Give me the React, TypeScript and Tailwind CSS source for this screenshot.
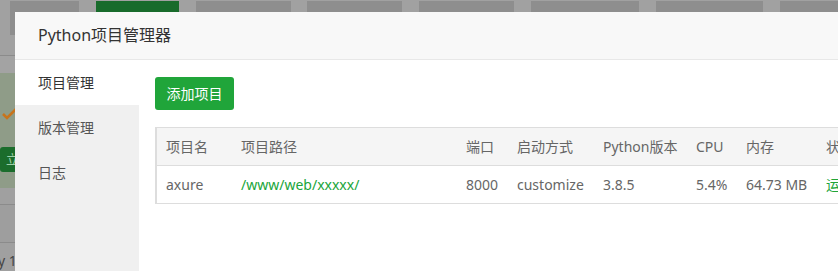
import React from "react";

const font = { fontFamily: '"Noto Sans", "Noto Sans CJK SC", sans-serif' };

const cols = [
  { w: "w-[75px]", head: "项目名", cell: "axure", green: false },
  { w: "w-[225px]", head: "项目路径", cell: "/www/web/xxxxx/", green: true },
  { w: "w-[51px]", head: "端口", cell: "8000", green: false },
  { w: "w-[86px]", head: "启动方式", cell: "customize", green: false },
  { w: "w-[93px]", head: "Python版本", cell: "3.8.5", green: false },
  { w: "w-[50px]", head: "CPU", cell: "5.4%", green: false },
  { w: "w-[80px]", head: "内存", cell: "64.73 MB", green: false },
  { w: "w-[100px]", head: "状态", cell: "运行中", green: true },
];

function Background() {
  return (
    <div className="flex flex-col w-full h-full bg-[#a0a0a0]">
      <div className="h-[57px] border-b border-[#8b8b8b] bg-[#a1a1a1]">
        <div className="flex pt-[1px] pl-[10px]">
          <div className="w-[72px] h-[34px] bg-[#8e8e8e]" />
          <div className="ml-[17px] w-[86px] h-[34px] bg-[#186b2b]" />
          <div className="ml-[17px] w-[99px] h-[34px] bg-[#8e8e8e]" />
          <div className="ml-[16px] w-[99px] h-[34px] bg-[#8e8e8e]" />
          <div className="ml-[17px] w-[99px] h-[34px] bg-[#8e8e8e]" />
          <div className="ml-[17px] w-[113px] h-[34px] bg-[#8e8e8e]" />
          <div className="ml-[17px] w-[112px] h-[34px] bg-[#8e8e8e]" />
          <div className="ml-[17px] w-[60px] h-[34px] bg-[#8e8e8e]" />
        </div>
      </div>
      <div className="h-[17px] bg-[#a3a3a3]" />
      <div className="h-[117px] bg-[#8f9c88] flex flex-col">
        <div className="h-[35px]" />
        <svg width="16" height="12" viewBox="0 0 16 12" className="ml-[2px]">
          <path d="M1 6 L5 10 L14 1" stroke="#c8741c" strokeWidth="2.6" fill="none" />
        </svg>
        <div className="h-[27px]" />
        <div className="w-[15px] h-[25px] bg-[#1b6d2c] rounded-l-[3px] text-[13px] leading-[25px] text-[#9fd0a8] pl-[6px] overflow-hidden whitespace-nowrap" style={font}>
          立
        </div>
      </div>
      <div className="h-[17px] border-b border-[#8b8b8b] bg-[#a0a0a0]" />
      <div className="h-[39px] border-b border-[#8b8b8b] bg-[#9e9e9e]" />
      <div className="flex-1 bg-[#a0a0a0] text-[14px] leading-[20px] text-[#444] pt-[8px] -ml-[2px]" style={font}>
        y 1
      </div>
    </div>
  );
}

export default function App() {
  return (
    <div className="relative w-[838px] h-[271px] overflow-hidden" style={font}>
      <Background />
      <div className="absolute left-[15px] top-[12px] w-[900px] h-[320px] bg-white flex flex-col">
        <div className="h-[48px] bg-[#f8f8f8] border-b border-[#e8e8e8] pl-[23px] text-[16px] leading-[47px] text-[#333]">
          Python项目管理器
        </div>
        <div className="flex flex-1">
          <div className="w-[124px] shrink-0 bg-[#f0f0f0] flex flex-col text-[14px] text-[#555]">
            <div className="h-[45px] leading-[45px] pl-[23px] bg-white text-[#333]">项目管理</div>
            <div className="h-[45px] leading-[45px] pl-[23px]">版本管理</div>
            <div className="h-[45px] leading-[45px] pl-[23px]">日志</div>
          </div>
          <div className="flex-1 min-w-0 pl-[16px] pt-[17px]">
            <button className="w-[79px] h-[33px] bg-[#20a53a] rounded-[3px] text-white text-[14px] leading-[33px] text-center">
              添加项目
            </button>
            <div className="mt-[17px] border-l-2 border-t border-[#dddddd] text-[14px] text-[#666]">
              <div className="flex h-[38px] bg-[#f5f5f5] border-b border-[#dddddd] items-center">
                {cols.map((c) => (
                  <div key={c.head} className={`${c.w} shrink-0 pl-[9px] whitespace-nowrap`}>
                    {c.head}
                  </div>
                ))}
              </div>
              <div className="flex h-[38px] border-b border-[#dddddd] items-center bg-white">
                {cols.map((c) => (
                  <div
                    key={c.head}
                    className={`${c.w} shrink-0 pl-[9px] whitespace-nowrap ${c.green ? "text-[#20a53a]" : ""}`}
                  >
                    {c.cell}
                  </div>
                ))}
              </div>
            </div>
          </div>
        </div>
      </div>
    </div>
  );
}
